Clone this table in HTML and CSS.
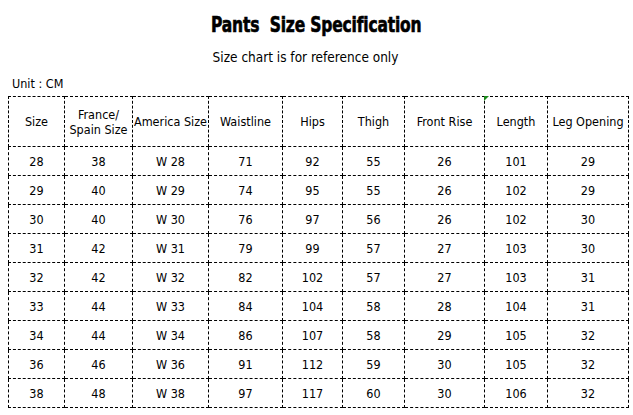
FILE: index.html
```html
<!DOCTYPE html>
<html>
<head>
<meta charset="utf-8">
<link rel="stylesheet" href="styles.css">
</head>
<body>
<div class="page">
  <h1 class="title"><span class="title-text">Pants&nbsp; Size Specification</span></h1>
  <p class="subtitle">Size chart is for reference only</p>
  <p class="unit">Unit : CM</p>
  <table class="chart">
    <colgroup>
      <col style="width:56px"><col style="width:68px"><col style="width:76px"><col style="width:74px"><col style="width:60px"><col style="width:62px"><col style="width:80px"><col style="width:63px"><col style="width:81px">
    </colgroup>
    <thead>
      <tr>
        <th>Size</th><th>France/<br>Spain Size</th><th>America Size</th><th>Waistline</th><th>Hips</th><th>Thigh</th><th>Front Rise</th><th class="note">Length<span class="flag"></span></th><th>Leg Opening</th>
      </tr>
    </thead>
    <tbody>
      <tr><td>28</td><td>38</td><td>W 28</td><td>71</td><td>92</td><td>55</td><td>26</td><td>101</td><td>29</td></tr>
      <tr><td>29</td><td>40</td><td>W 29</td><td>74</td><td>95</td><td>55</td><td>26</td><td>102</td><td>29</td></tr>
      <tr><td>30</td><td>40</td><td>W 30</td><td>76</td><td>97</td><td>56</td><td>26</td><td>102</td><td>30</td></tr>
      <tr><td>31</td><td>42</td><td>W 31</td><td>79</td><td>99</td><td>57</td><td>27</td><td>103</td><td>30</td></tr>
      <tr><td>32</td><td>42</td><td>W 32</td><td>82</td><td>102</td><td>57</td><td>27</td><td>103</td><td>31</td></tr>
      <tr><td>33</td><td>44</td><td>W 33</td><td>84</td><td>104</td><td>58</td><td>28</td><td>104</td><td>31</td></tr>
      <tr><td>34</td><td>44</td><td>W 34</td><td>86</td><td>107</td><td>58</td><td>29</td><td>105</td><td>32</td></tr>
      <tr><td>36</td><td>46</td><td>W 36</td><td>91</td><td>112</td><td>59</td><td>30</td><td>105</td><td>32</td></tr>
      <tr><td>38</td><td>48</td><td>W 38</td><td>97</td><td>117</td><td>60</td><td>30</td><td>106</td><td>32</td></tr>
    </tbody>
  </table>
</div>
</body>
</html>
```

FILE: styles.css
```css
html, body {
  margin: 0;
  padding: 0;
  background: #ffffff;
}
body {
  font-family: "DejaVu Sans Condensed", "DejaVu Sans", sans-serif;
  color: #000;
}
.page {
  width: 633px;
  height: 415px;
  padding: 0 0 0 8px;
  box-sizing: border-box;
  display: flex;
  flex-direction: column;
}
.title {
  margin: 11px 0 0 0;
  height: 28px;
  font-family: "DejaVu Sans Condensed", "DejaVu Sans", sans-serif;
  font-weight: bold;
  font-size: 21px;
  line-height: 28px;
  text-align: center;
  padding-right: 8px;
}
.title-text {
  display: inline-block;
  transform: scaleX(0.82);
  -webkit-text-stroke: 0.6px #000;
  letter-spacing: -0.2px;
}
.subtitle {
  margin: 9px 0 0 0;
  font-size: 13.5px;
  line-height: 18px;
  text-align: center;
  padding-right: 30px;
}
.unit {
  margin: 11px 0 0 4px;
  font-size: 12.5px;
  line-height: 14px;
}
.chart {
  margin-top: 5px;
  border-collapse: collapse;
  table-layout: fixed;
  width: 621px;
  font-size: 12.5px;
}
.chart th, .chart td {
  border: 1px dashed #000;
  padding: 0;
  text-align: center;
  vertical-align: middle;
  font-weight: normal;
  white-space: nowrap;
  line-height: 15px;
}
.chart th {
  height: 49px;
}
.chart td {
  height: 28px;
}
.note {
  position: relative;
}
.flag {
  position: absolute;
  left: -1px;
  top: -1px;
  width: 0;
  height: 0;
  border-top: 5px solid #1a8a1a;
  border-right: 5px solid transparent;
}
```
